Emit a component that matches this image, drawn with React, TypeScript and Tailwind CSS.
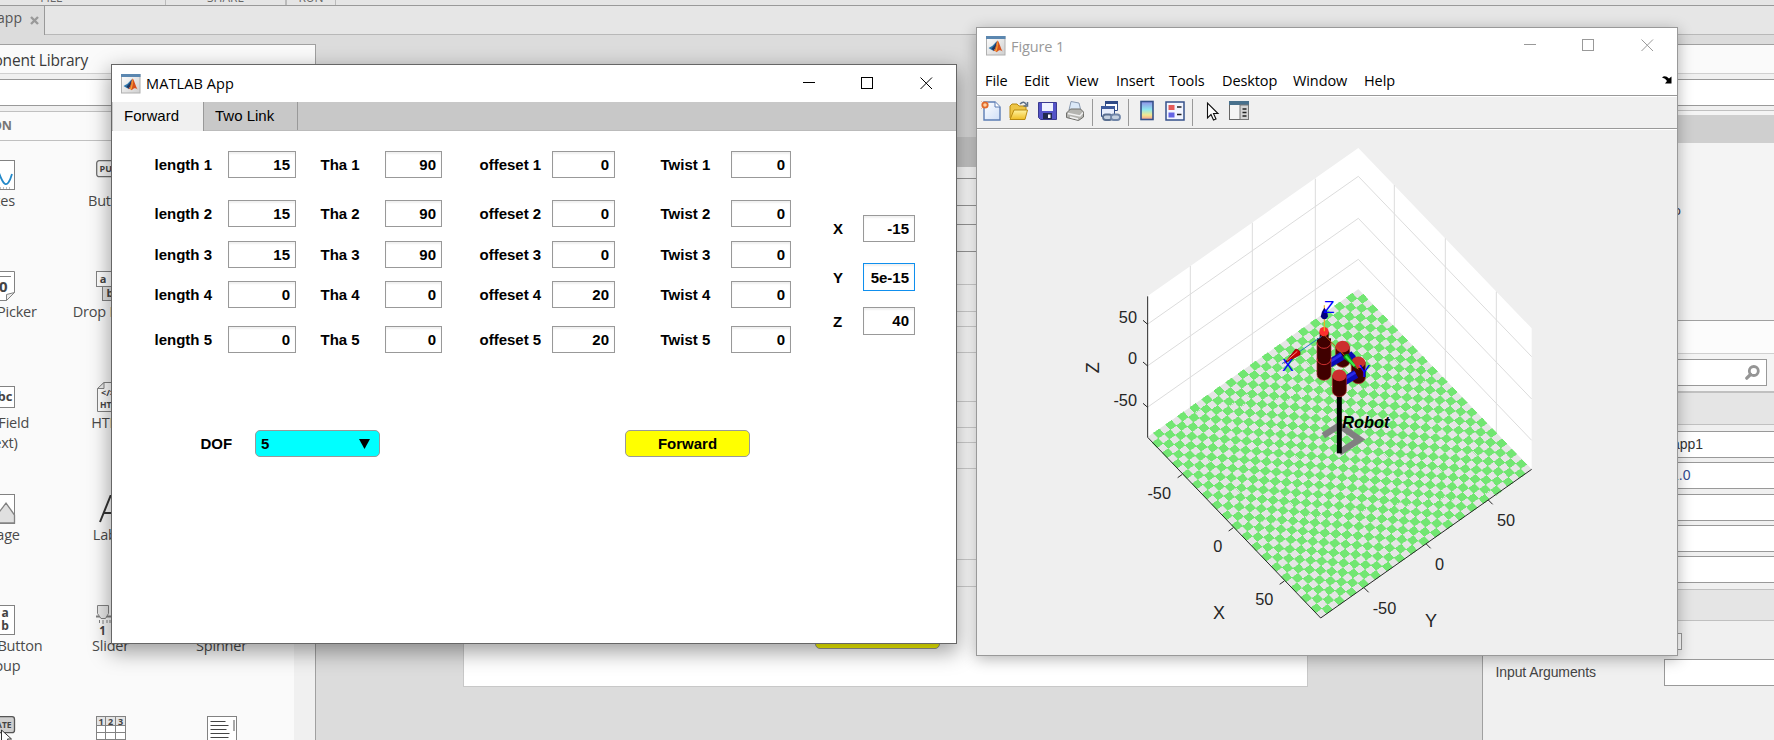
import React from "react";

const UI = "font-['Open_Sans','Noto_Sans',sans-serif]";
const ARIAL = "font-['Liberation_Sans',Arial,sans-serif]";

function MatlabIcon() {
  return (
    <svg width="20" height="20" viewBox="0 0 20 20" className="shrink-0">
      <defs>
        <linearGradient id="mlbg" x1="0" y1="0" x2="1" y2="1">
          <stop offset="0" stopColor="#ffffff" />
          <stop offset="1" stopColor="#cfcfcf" />
        </linearGradient>
      </defs>
      <rect x=".5" y=".5" width="18.5" height="18.5" fill="url(#mlbg)" stroke="#b0b0b0" />
      <rect x="0" y="0" width="19.5" height="3" fill="#5b87b0" />
      <path d="M2.5 12L6.5 9.8L10.5 5.5L9 12L6.5 14.5z" fill="#2f77ad" />
      <path d="M5.5 12.6L8.5 9.5L11.3 4.6L9.6 12L7.6 15z" fill="#23385f" />
      <path d="M7.5 15.2C9.8 13.5 10 6.5 11.8 4.6C13 6 14.2 11 16.6 15.4C14.5 13.6 13 13.6 10.5 16.2C9.8 15.2 9 14.8 7.5 15.2z" fill="#d8501b" />
      <path d="M8.8 14.6C10.8 12.5 10.6 7.5 11.8 4.8C12.2 8 11.6 13 10.4 15.8z" fill="#f2a23a" />
    </svg>
  );
}

function WindowButtons({ color }: { color: string }) {
  return (
    <svg width="130" height="14" viewBox="0 0 130 14" fill="none" stroke={color} className="shrink-0">
      <path d="M0 5.5h12M58.500 .5h11v11h-11z" shapeRendering="crispEdges" />
      <path d="M117.500 .5l11.500 11.500M129 .5l-11.500 11.500" />
    </svg>
  );
}

/* ---------- component library ---------- */

type Item = { label: string; icon: React.ReactNode };

function Glyph({ x, y, size = 9, children, anchor = "middle" }: { x: number; y: number; size?: number; children: React.ReactNode; anchor?: "middle" | "start" }) {
  return (
    <text x={x} y={y} fontSize={size} fontWeight="700" textAnchor={anchor} fill="#444" stroke="none" fontFamily="Open Sans, Noto Sans, sans-serif">
      {children}
    </text>
  );
}

function Icon({ children }: { children: React.ReactNode }) {
  return (
    <svg width="30" height="30" viewBox="0 0 30 30" fill="none" stroke="#828282" className="shrink-0 overflow-visible">
      {children}
    </svg>
  );
}

const items: (Item | null)[] = [
  { label: "Axes", icon: <Icon><rect x=".5" y=".5" width="29" height="29" fill="#fff" /><path d="M3 15C6 2 10 2 14 13S22 31 27 14" stroke="#2389c9" strokeWidth="1.8" /><path d="M3 28h24" strokeDasharray="1 2" /></Icon> },
  { label: "Button", icon: <Icon><rect x=".7" y=".7" width="29" height="16" rx="2.500" fill="#f4f4f4" stroke="#6e6e6e" strokeWidth="1.300" /><Glyph x={3.500} y={12} anchor="start">PUSH</Glyph></Icon> },
  null,
  { label: "Date Picker", icon: <Icon><path d="M.5.5h29v21l-8 8H.5z" fill="#fff" /><path d="M3 5.500h23M29.500 21.500l-8 8v-6z" fill="#eee" /><Glyph x={14} y={21} size={15}>10</Glyph></Icon> },
  { label: "Drop Down", icon: <Icon><rect x="6.500" y="15.500" width="23" height="14" fill="#e3e3e3" /><rect x=".5" y=".5" width="29" height="15" fill="#fff" /><Glyph x={7} y={11.500} size={11}>a</Glyph><Glyph x={14} y={26} size={11}>b</Glyph></Icon> },
  null,
  { label: "Edit Field (Text)", icon: <Icon><rect x=".5" y="4.500" width="29" height="21" fill="#fff" /><Glyph x={16} y={19} size={13}>abc</Glyph></Icon> },
  { label: "HTML", icon: <Icon><path d="M8 .5h21.500v29H1.500V7z" fill="#fff" /><path d="M8 .5v6H1.500z" fill="#eee" /><Glyph x={5} y={14} anchor="start" size={9}>&lt;/&gt;</Glyph><Glyph x={4} y={26} anchor="start" size={8.500}>HTML</Glyph></Icon> },
  null,
  { label: "Image", icon: <Icon><rect x=".5" y=".5" width="29" height="29" fill="#fff" /><path d="M1 29V27L8 17l4 4 9-12 8.500 12V29z" fill="#e0e0e0" strokeWidth="1.3" /></Icon> },
  { label: "Label", icon: <Icon><path d="M4 28L14.500 2h2L27 28M7 19h17" stroke="#333" strokeWidth="2" /></Icon> },
  null,
  { label: "Radio Button Group", icon: <Icon><rect x=".5" y=".5" width="29" height="29" fill="#fff" /><Glyph x={20} y={11.500} size={12}>a</Glyph><Glyph x={20} y={25} size={12}>b</Glyph></Icon> },
  { label: "Slider", icon: <Icon><path d="M0 11.500h30" strokeWidth="2" /><path d="M1.500.5h11v8l-3 5H5l-3.500-5z" fill="#e8e8e8" /><path d="M3.500 15v3M7 15v4M11 15v3M14 15v3" /><Glyph x={6.500} y={30} size={11.500}>1</Glyph></Icon> },
  { label: "Spinner", icon: null },
  { label: "", icon: <Icon><rect x="0" y=".7" width="29.500" height="16" rx="2.500" fill="#cfcfcf" stroke="#555" strokeWidth="1.300" /><Glyph x={14} y={12} size={8.500}>STATE</Glyph><path d="M16.500 14v13l3-3 2.500 5 2.500-1-2-5h4z" fill="#fff" stroke="#333" /></Icon> },
  { label: "", icon: <Icon><rect x=".5" y=".5" width="29" height="29" fill="#fff" /><path d="M1 1h28v8H1z" fill="#e4e4e4" stroke="none" /><path d="M.5.5h29v29H.500zM.5 9.500h29M.5 16.500h29M.5 23.500h29M9.500.5v29M19.500.5v29" /><Glyph x={5} y={8.500}>1</Glyph><Glyph x={14.500} y={8.500}>2</Glyph><Glyph x={24.500} y={8.500}>3</Glyph></Icon> },
  { label: "", icon: <Icon><rect x=".5" y=".5" width="29" height="29" fill="#fff" /><path d="M3.500 5.500h15M3.500 9.500h18M3.500 13.500h16M3.500 17.500h19M3.500 21.500h18" stroke="#444" strokeWidth="1.2" /><path d="M27 4v11" stroke="#aaa" strokeWidth="2" /></Icon> },
];

function Library() {
  return (
    <aside className="mt-[9px] flex w-[316px] shrink-0 flex-col overflow-hidden border-t border-r border-[#a0a0a0] bg-[#f0f0f0]">
      <div className="flex h-[29px] shrink-0 items-center border-b border-[#d0d0d0] bg-[#fafafa] pt-[3px]">
        <div className={`w-[88px] text-right text-[15.500px] leading-none tracking-[-0.2px] whitespace-nowrap text-[#3a3a3a] ${UI}`}>
          <span className="float-right">Component Library</span>
        </div>
      </div>
      <div className="mt-[5px] h-[27px] w-[300px] shrink-0 border border-l-0 border-[#999] bg-white" />
      <div className="mt-[5px] flex h-[30px] shrink-0 items-center border-y border-[#c0c0c0] bg-[#fafafa]">
        <div className={`w-[12px] text-[12.500px] font-bold text-[#777] ${UI}`}>
          <span className="float-right">COMMON</span>
        </div>
      </div>
      <div className="flex-1 overflow-hidden">
        <div className="h-full w-[294px] overflow-hidden bg-[#fafafa] pt-[19px]">
          <div className="-ml-[56px] grid w-[333px] auto-rows-[111.2px] grid-cols-3">
            {items.map((it, i) => (
              <div key={i} className="flex flex-col items-center">
                {it && (
                  <>
                    <div className="h-[30px]">{it.icon}</div>
                    <div className={`mt-px w-[96px] text-center text-[14.500px] leading-[20px] tracking-[-0.2px] text-[#4a4a4a] ${UI}`}>{it.label}</div>
                  </>
                )}
              </div>
            ))}
          </div>
        </div>
      </div>
    </aside>
  );
}

/* ---------- design canvas ---------- */

const canvasRows = [
  "h-[12px] border-[#999]", "h-[27px] border-[#999]", "h-[19px] border-[#999]", "h-[27px] border-[#999]",
  "h-[33px] border-[#d2d2d2]", "h-[27px] border-[#d2d2d2]", "h-[15px] border-[#d2d2d2]", "h-[26px] border-[#d2d2d2]",
  "h-[49px] border-[#d2d2d2]", "h-[26px] border-[#d2d2d2]", "h-[15px] border-[#d2d2d2]", "h-[26px] border-[#d2d2d2]",
  "h-[91px] border-[#d2d2d2]", "h-[27px] border-[#d2d2d2]",
];

function Canvas() {
  return (
    <main className="flex-1">
      <div className="mt-[102px] ml-[147px] flex h-[550px] w-[845px] flex-col border border-t-0 border-[#c8c8c8] bg-white">
        <div className="h-[30px] shrink-0 bg-[#c8c8c8]" />
        {canvasRows.map((c, i) => (
          <div key={i} className={`shrink-0 border-b ${c}`} />
        ))}
        <div className="mt-[35px] ml-[351px] h-[27px] w-[125px] rounded-[5px] border border-[#999] bg-[#ffff00]" />
      </div>
    </main>
  );
}

/* ---------- inspector ---------- */

function Inspector() {
  const box = "ml-[181px] h-[27px] shrink-0 border border-r-0 border-[#999] bg-white";
  return (
    <aside className={`mt-[9px] flex w-[292px] shrink-0 flex-col border-t border-l border-[#a0a0a0] bg-[#f0f0f0] ${ARIAL}`}>
      <div className="h-[29px] shrink-0 border-b border-[#d0d0d0] bg-[#fafafa]" />
      <div className="mt-[5px] h-[27px] shrink-0 border-y border-[#999] bg-white" />
      <div className="mt-[4px] h-[5px] shrink-0 border-t border-[#c0c0c0] bg-[#f4f4f4]" />
      <div className="h-[28px] shrink-0 bg-[#cfcfcf]" />
      <div className={`h-[177px] shrink-0 bg-[#f4f4f4] pt-[57px] pl-[174px] text-[13.500px] text-[#334] ${UI}`}>app</div>
      <div className="h-[34px] shrink-0 border-t border-b border-t-[#a0a0a0] border-b-[#d0d0d0] bg-[#fcfcfc]" />
      <div className="h-[37px] shrink-0 bg-[#f4f4f4] pt-[5px]">
        <div className="mr-[7px] flex h-[27px] items-center justify-end border border-[#999] bg-white pr-[6px]">
          <svg width="15" height="16" viewBox="0 0 15 16" fill="none" stroke="#959595">
            <circle cx="8.800" cy="6" r="4.500" strokeWidth="2.800" />
            <path d="M5.500 9.500L1.800 13.200" strokeWidth="3.200" strokeLinecap="round" />
          </svg>
        </div>
      </div>
      <div className="h-[34px] shrink-0 border-t-2 border-b border-[#c0c0c0] bg-[#e5e5e5]" />
      <div className={`mt-[6px] flex items-center text-[14px] text-[#333] ${box}`}><span className="pl-[7px]">app1</span></div>
      <div className={`mt-[4px] flex items-center text-[14px] text-[#334a90] ${box}`}><span className="pl-[6px]">1.0</span></div>
      <div className={`mt-[5px] ${box}`} />
      <div className={`mt-[4px] ${box}`} />
      <div className={`mt-[4px] ${box}`} />
      <div className="mt-[6px] h-[32px] shrink-0 border-y border-[#c0c0c0] bg-[#e5e5e5]" />
      <div className="mt-[12px] ml-[183px] h-[17px] w-[16px] shrink-0 border border-[#999] bg-white" />
      <div className="mt-[9px] flex shrink-0 items-center">
        <div className="w-[181px] pl-[12.5px] text-[14px] tracking-[-0.1px] text-[#444]">Input Arguments</div>
        <div className="h-[27px] flex-1 border border-r-0 border-[#999] bg-white" />
      </div>
    </aside>
  );
}

/* ---------- app window ---------- */

const rows = [
  { n: 1, mt: "mt-[20px]", v: ["15", "90", "0", "0"] },
  { n: 2, mt: "mt-[22px]", v: ["15", "90", "0", "0"] },
  { n: 3, mt: "mt-[14px]", v: ["15", "90", "0", "0"] },
  { n: 4, mt: "mt-[13px]", v: ["0", "0", "20", "0"] },
  { n: 5, mt: "mt-[18px]", v: ["0", "0", "20", "0"] },
];

const fieldCols = [
  { label: "length", lw: "w-[74px]", w: "w-[68px]", ml: "" },
  { label: "Tha", lw: "w-[65px]", w: "w-[57px]", ml: "ml-[24px]" },
  { label: "offeset", lw: "w-[73px]", w: "w-[63px]", ml: "ml-[37px]" },
  { label: "Twist", lw: "w-[71px]", w: "w-[60px]", ml: "ml-[45px]" },
];

const inputBase = "flex items-center justify-end border bg-white pt-[2px] pr-[5px] shadow-[inset_0_2px_2px_rgba(0,0,0,0.06)]";

function AppWindow() {
  return (
    <section className="absolute top-[64px] left-[111px] flex h-[580px] w-[846px] flex-col border border-[#666] bg-white shadow-[0_7px_20px_1px_rgba(0,0,0,0.38)]">
      <header className="flex h-[37px] shrink-0 items-center justify-between pr-[23px] pl-[9px]">
        <div className="flex items-center gap-[5px]">
          <MatlabIcon />
          <span className={`text-[14.500px] tracking-[0.1px] text-black ${UI}`}>MATLAB App</span>
        </div>
        <WindowButtons color="#000" />
      </header>
      <nav className={`flex h-[29px] shrink-0 border-b border-[#bbb] bg-[#c8c8c8] pl-px text-[15px] text-black ${ARIAL}`}>
        <div className="-mb-px flex w-[91px] items-center border-r border-[#999] bg-[#f0f0f0] pb-px pl-[11px]">Forward</div>
        <div className="flex w-[94px] items-center border-r border-[#999] pt-px pl-[11px]">Two Link</div>
      </nav>
      <div className={`flex text-[15px] font-bold text-black ${ARIAL}`}>
        <div className="pl-[42px]">
          {rows.map((r) => (
            <div key={r.n} className={`flex h-[27px] ${r.mt}`}>
              {fieldCols.map((c, i) => (
                <div key={c.label} className={`flex items-center ${c.ml}`}>
                  <div className={`pt-[2px] pl-[0.5px] whitespace-nowrap ${c.lw}`}>{c.label} {r.n}</div>
                  <div className={`h-[27px] border-[#999] ${inputBase} ${c.w}`}>{r.v[i]}</div>
                </div>
              ))}
            </div>
          ))}
        </div>
        <div className="pl-[41px]">
          <div className="mt-[84px] flex items-center">
            <div className="w-[31px] pt-[2px] pl-px">X</div>
            <div className={`h-[27px] w-[52px] border-[#999] ${inputBase}`}>-15</div>
          </div>
          <div className="mt-[21px] flex items-center">
            <div className="w-[31px] pt-[2px] pl-px">Y</div>
            <div className={`h-[28px] w-[52px] border-[#0f8fee] ${inputBase}`}>5e-15</div>
          </div>
          <div className="mt-[16px] flex items-center">
            <div className="w-[31px] pt-[2px] pl-px">Z</div>
            <div className={`h-[28px] w-[52px] border-[#999] ${inputBase} pb-[1px]`}>40</div>
          </div>
        </div>
      </div>
      <div className={`mt-[77px] flex items-center pl-[88px] text-[15px] font-bold text-black ${ARIAL}`}>
        <div className="w-[55px] pt-[2px] pl-[0.5px]">DOF</div>
        <div className="flex h-[27px] w-[125px] items-center justify-between rounded-[5px] border border-[#999] bg-[#00ffff] pr-[9px] pl-[5px]">
          <span className="pt-[2px]">5</span>
          <svg width="11" height="10" viewBox="0 0 11 10"><path d="M0 0h11L5.500 10z" fill="#000" /></svg>
        </div>
        <div className="ml-[245px] flex h-[27px] w-[125px] items-center justify-center rounded-[5px] border border-[#999] bg-[#ffff00] pt-[2px]">Forward</div>
      </div>
    </section>
  );
}

/* ---------- figure window ---------- */

const L = [262, 922];
const U = [520, 542];
const V = [633, -445];
const N = 35;
const pt = (i: number, j: number) =>
  `${(L[0] + (U[0] * i) / N + (V[0] * j) / N).toFixed(1)} ${(L[1] + (U[1] * i) / N + (V[1] * j) / N).toFixed(1)}`;

let tiles = "";
for (let i = 0; i < N; i++) {
  for (let j = 0; j < N; j++) {
    if ((i + j) % 2) tiles += `M${pt(i, j)}L${pt(i + 1, j)}L${pt(i + 1, j + 1)}L${pt(i, j + 1)}z`;
  }
}

function Cylinder({ x, top, bottom, r = 21 }: { x: number; top: number; bottom: number; r?: number }) {
  const ry = r * 0.85;
  return (
    <g>
      <path d={`M${x - r} ${top}V${bottom - ry}A${r} ${ry} 0 0 0 ${x + r} ${bottom - ry}V${top}z`} fill="#400000" stroke="#b52a2a" strokeWidth="2" />
      <ellipse cx={x} cy={top} rx={r} ry={ry} fill="#cc2f2f" />
    </g>
  );
}

function Plot() {
  return (
    <svg width="480" height="510" viewBox="0 0 1440 1530" fontFamily="Liberation Sans, Arial, sans-serif">
      <path d="M262 499L895 54L1415 595V1018L895 478L262 922z" fill="#fff" />
      <path d="M391 408V832M577 278V702M766 146V568M1003 165V590M1156 325V748M1309 485V908M262 583L895 139L1415 680M262 708L895 265L1415 807M262 832L895 388L1415 931" fill="none" stroke="#dcdcdc" strokeWidth="3" />
      <path d="M262 922L895 478L1415 1018L782 1464z" fill="#e5e5e5" />
      <path d={tiles} fill="#72e672" stroke="#72e672" strokeWidth="1.500" shapeRendering="crispEdges" />
      <path d="M263 499V922L782 1464L1415 1018M263 583l-14-12M263 708l-14-12M263 832l-14-12M367 1033l-14 10M520 1193l-14 10M673 1353l-14 10M913 1374l13 13M1099 1242l13 13M1285 1110l13 13" fill="none" stroke="#262626" strokeWidth="3" />
      <g fill="#262626" fontSize="49">
        <text x="231" y="578" textAnchor="end">50</text>
        <text x="231" y="702" textAnchor="end">0</text>
        <text x="231" y="827" textAnchor="end">-50</text>
        <text x="333" y="1106" textAnchor="end">-50</text>
        <text x="487" y="1265" textAnchor="end">0</text>
        <text x="640" y="1424" textAnchor="end">50</text>
        <text x="938" y="1451">-50</text>
        <text x="1125" y="1319">0</text>
        <text x="1311" y="1189">50</text>
      </g>
      <g fill="#262626" fontSize="54" textAnchor="middle">
        <text x="477" y="1466">X</text>
        <text x="1113" y="1490">Y</text>
        <text transform="translate(117 713) rotate(-90)">Z</text>
      </g>

      <path d="M790 917L838 886L899 928L838 968" fill="none" stroke="#808080" strokeWidth="19" />
      <path d="M838 790V970" stroke="#000" strokeWidth="15" />
      <path d="M855 668L890 700" stroke="#0a0aa8" strokeWidth="24" />
      <Cylinder x={848} top={650} bottom={712} />
      <path d="M808 701L848 677" stroke="#0b0bb4" strokeWidth="25" />
      <path d="M807 697L844 674" stroke="#2b2bea" strokeWidth="8" />
      <path d="M868 669L882 684" stroke="#0b0bb4" strokeWidth="16" />
      <Cylinder x={895} top={697} bottom={761} />
      <path d="M850 755L888 732" stroke="#0b0bb4" strokeWidth="26" />
      <path d="M849 750L886 727" stroke="#2b2bea" strokeWidth="8" />
      <Cylinder x={838} top={736} bottom={800} />
      <Cylinder x={792} top={637} bottom={751} />
      <path d="M771 625V640A21 17 0 0 0 813 640V625z" fill="#400000" />
      <path d="M771 637A21 18 0 0 0 813 637M771 686A21 18 0 0 0 813 686" fill="none" stroke="#cc2f2f" strokeWidth="3" />
      <path d="M779 605V643A13.500 8 0 0 0 806 643V605z" fill="#400000" />
      <circle cx="792" cy="605" r="14" fill="#ff2e2e" />
      <path d="M785 619L666 701" stroke="#1f7cc0" strokeWidth="3" />
      <path d="M792 614L895 718" stroke="#c05a10" strokeWidth="3" />
      <path d="M793 604V526" stroke="#edb120" strokeWidth="3.500" />
      <path d="M673 700L707 657Q724 660 720 675z" fill="#c40000" stroke="#500" strokeWidth="1.500" />
      <path d="M680 692L712 664" stroke="#ff8a8a" strokeWidth="3" />
      <path d="M893 719L850 684Q850 671 865 671z" fill="#0a8a14" />
      <path d="M884 708L857 678" stroke="#35f045" strokeWidth="7" />
      <path d="M782 560Q783 546 793 533Q804 546 804 560Q793 576 782 560z" fill="#000080" />
      <g fontSize="52" fill="#0000ff">
        <text x="791" y="548">Z</text>
        <text x="666" y="722">X</text>
        <text x="896" y="740">Y</text>
      </g>
      <text x="847" y="893" fontSize="49" fontWeight="700" fontStyle="italic" fill="#000">Robot</text>
    </svg>
  );
}

const menus: [string, string][] = [
  ["File", "w-[39px]"], ["Edit", "w-[43px]"], ["View", "w-[49px]"], ["Insert", "w-[53px]"],
  ["Tools", "w-[53px]"], ["Desktop", "w-[71px]"], ["Window", "w-[71px]"], ["Help", "w-[40px]"],
];

function Toolbar() {
  return (
    <svg width="290" height="31" viewBox="0 0 290 31" fill="none">
      <defs>
        <linearGradient id="pg" x1="0" y1="0" x2="1" y2="1"><stop offset="0" stopColor="#fff" /><stop offset="1" stopColor="#cfdff8" /></linearGradient>
        <linearGradient id="cb" x1="0" y1="0" x2="0" y2="1"><stop offset="0" stopColor="#8f8fe8" /><stop offset=".45" stopColor="#8fe8ee" /><stop offset=".75" stopColor="#f3e88f" /><stop offset="1" stopColor="#f59a8f" /></linearGradient>
        <linearGradient id="fo" x1="0" y1="0" x2="0" y2="1"><stop offset="0" stopColor="#fff3a0" /><stop offset="1" stopColor="#efbd24" /></linearGradient>
      </defs>
      <path d="M7 5h11l5 5v13H7z" fill="url(#pg)" stroke="#5c7db4" strokeWidth="1.400" />
      <path d="M18 5v5h5" fill="#fff" stroke="#5c7db4" />
      <circle cx="8" cy="8" r="2.700" stroke="#e2692a" strokeWidth="1.800" fill="#ffd0a0" />
      <path d="M4.500 4.500l1 1M11.500 4.500l-1 1M4.500 11.500l1-1" stroke="#e88a5a" />
      <path d="M33 21V9l2-2h5l2 2h7v4" fill="#eec545" stroke="#b88a10" />
      <path d="M33 22.500L37 13h13.500l-2.500 9.500z" fill="url(#fo)" stroke="#b88a10" />
      <path d="M43 7q4-4 6.500 1M50.500 5v4h-4" stroke="#5d7086" strokeWidth="1.500" />
      <path d="M61.500 5.500h18v17h-16l-2-2z" fill="#5454c8" stroke="#3a3a90" />
      <path d="M65 6h11v8H65z" fill="#eef2ff" />
      <path d="M66 16h9v6h-9z" fill="#222a50" /><path d="M71 17.500h2.500v3.500H71z" fill="#fff" />
      <path d="M92 13L94 4.500l8 1.500 2 8z" fill="#dbe9f8" stroke="#8a9ab0" />
      <path d="M89.500 16l4-4h10l3 3v5l-5 3.500-12-3z" fill="#b4b4b0" stroke="#6e6e6a" />
      <path d="M91 16.500l12 2.500 3-3.500M93 20l8 2" stroke="#f0f0f0" strokeWidth="1.400" />
      <path d="M115.500 2v27M151.500 2v27M215.500 2v27" stroke="#999" />
      <path d="M128.500 4.500h12v9h-12z" fill="#fff" stroke="#2f4a86" /><path d="M128 4h13v3h-13z" fill="#2f4a86" />
      <path d="M124.500 9.500h13v10h-13z" fill="#e8eefc" stroke="#2f4a86" /><path d="M124 9h14v3h-14z" fill="#3d5a9c" />
      <rect x="126" y="17.500" width="9" height="5.500" rx="2.700" fill="#c4d0e0" stroke="#5a6f90" strokeWidth="1.800" /><rect x="134" y="17.500" width="9" height="5.500" rx="2.700" fill="#c4d0e0" stroke="#6f85a8" strokeWidth="1.800" />
      <rect x="164" y="4.500" width="12" height="18" fill="url(#cb)" stroke="#35508a" strokeWidth="1.600" />
      <rect x="189" y="5" width="18" height="18" fill="#f2f5ff" stroke="#35508a" strokeWidth="1.500" />
      <path d="M191.500 8h6v5h-6z" fill="#e65a5a" /><path d="M191.500 15.500h6v5h-6z" fill="#6464e4" /><path d="M200 10h4.500M200 17.500h4.500" stroke="#222" strokeWidth="1.500" />
      <path d="M230.500 6v15l3.500-3.500 2.500 5.500 2.500-1-2.500-5.500h4.500z" fill="#fff" stroke="#111" strokeWidth="1.100" />
      <rect x="252.500" y="4.500" width="19" height="18" fill="#f4f4f4" stroke="#666" /><path d="M252 4h20v4h-20z" fill="#48708c" />
      <path d="M263 8h8.500v14.500H263z" fill="#d4d4d4" stroke="#777" /><path d="M265.500 12h4M265.500 15.500h4M265.500 19h4" stroke="#222" strokeWidth="1.300" />
    </svg>
  );
}

function FigureWindow() {
  return (
    <section className="absolute top-[27px] left-[976px] flex h-[629px] w-[702px] flex-col border border-[#999] bg-[#efefef] shadow-[0_3px_14px_rgba(0,0,0,0.30)]">
      <header className="flex h-[36px] shrink-0 items-center justify-between bg-white pr-[23px] pl-[9px]">
        <div className="flex items-center gap-[5px]">
          <MatlabIcon />
          <span className={`pt-[2px] text-[14.500px] tracking-[-0.1px] text-[#999] ${UI}`}>Figure 1</span>
        </div>
        <WindowButtons color="#999" />
      </header>
      <nav className={`flex h-[32px] shrink-0 items-center border-b border-[#999] bg-white pt-[2px] pr-[5px] pl-[8px] text-[14.500px] tracking-[-0.1px] text-black ${UI}`}>
        {menus.map(([m, w]) => (
          <span key={m} className={`whitespace-nowrap ${w}`}>{m}</span>
        ))}
        <svg width="10" height="9" viewBox="0 0 10 9" className="mb-[3px] ml-auto">
          <path d="M0 2.500Q3-.5 7 3.500L9.500 1.500V8.500H3L5 6Q3.500 3 0 2.500z" fill="#000" />
        </svg>
      </nav>
      <div className="h-[33px] shrink-0 border-t border-b border-t-white border-b-[#999] bg-[#f0f0f0]">
        <Toolbar />
      </div>
      <div className="flex-1 border-t border-white pl-[83px]">
        <Plot />
      </div>
    </section>
  );
}

/* ---------- page ---------- */

export default function App() {
  return (
    <div className="relative flex h-[740px] w-[1774px] flex-col overflow-hidden bg-[#dcdcdc]">
      <div className={`flex h-[6px] shrink-0 items-end overflow-hidden border-b border-[#999] bg-[#e5e5e5] text-[12px] leading-[12px] text-[#666] ${UI}`}>
        <div className="flex h-[5px] w-[166px] items-end justify-center overflow-hidden border-r border-[#bbb] pr-[62px] pb-[1px]"><span>FILE</span></div>
        <div className="flex h-[5px] w-[121px] items-end justify-center overflow-hidden border-r-2 border-[#bbb] pb-[1px]"><span>SHARE</span></div>
        <div className="flex h-[5px] w-[49px] items-end justify-center overflow-hidden border-r border-[#bbb] pb-[1px]"><span>RUN</span></div>
      </div>
      <div className="flex h-[29px] shrink-0">
        <div className="flex w-[45px] items-center border-r border-[#999] bg-[#dcdcdc]">
          <div className={`w-[22px] pb-[6px] text-[14px] text-[#555] ${UI}`}><span className="float-right">app</span></div>
          <svg width="9" height="9" viewBox="0 0 9 9" className="ml-[8px]" stroke="#999" strokeWidth="2.400"><path d="M1 1l7 7M8 1L1 8" /></svg>
        </div>
        <div className="flex-1 border-b border-[#b8b8b8] bg-[#e6e6e6]" />
      </div>
      <div className="flex min-h-0 flex-1">
        <Library />
        <Canvas />
        <Inspector />
      </div>
      <AppWindow />
      <FigureWindow />
    </div>
  );
}
